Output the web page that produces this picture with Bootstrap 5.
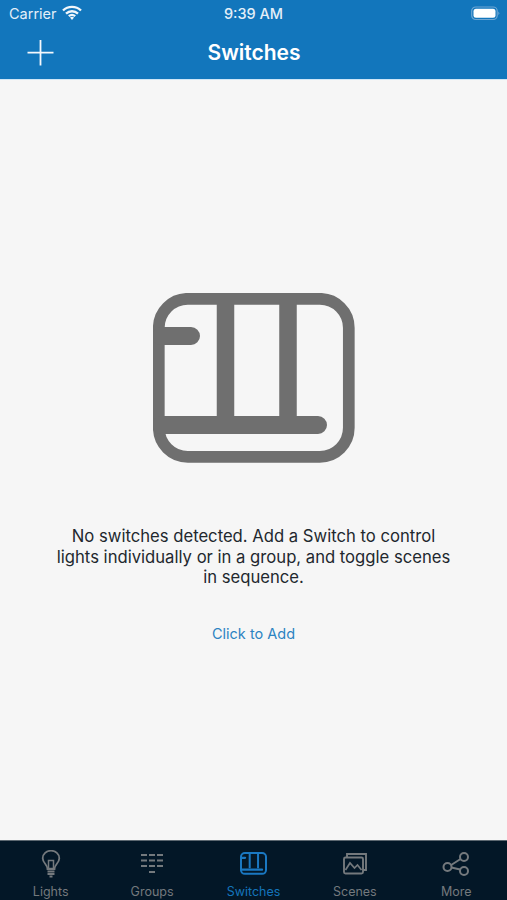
<!DOCTYPE html>
<html lang="en"><head><meta charset="utf-8"><title>Switches</title>
<link href="https://cdn.jsdelivr.net/npm/bootstrap@5.3.0/dist/css/bootstrap.min.css" rel="stylesheet">
<style>
html,body{height:900px;overflow:hidden}
body{font-family:Inter,"Liberation Sans",sans-serif;background:#f6f6f6;width:507px}
.shell{height:900px}
.topbar{background:#1276bc;color:#fff;height:80px;border-bottom:1px solid #cfe6f7}
.statusline{height:27px;font-size:14px;padding:0 7px 0 9px;position:relative;color:#e4eff8}
.statusline .clock{position:absolute;left:0;right:0;text-align:center;font-weight:500;font-size:14.5px;top:5px;line-height:17px}
.carrier{margin-top:5px;line-height:17px;font-size:14.5px}
.wifi{margin-top:4px;margin-left:1px}
.batt{margin-top:6px}
.navline{height:52px;position:relative}
.navtitle{font-size:21px;font-weight:600;line-height:26px;text-align:center;padding-top:13px;padding-left:1px}
.plus{position:absolute;left:27px;top:13px}
.stage{padding-top:213px}
.msg{font-size:16.65px;line-height:20.5px;color:#22282e;width:404px;margin:63px auto 0;text-align:center}
.addlink{font-size:14.5px;color:#2c83c2;text-decoration:none;margin-top:36px;line-height:20px;text-align:center;display:block}
.tabs{height:60px;background:#031727;border-top:1px solid #5d6871}
.tabitem{width:101.4px;font-size:12.5px;color:#74797d;line-height:15px;padding-top:9px;text-align:center}
.tabitem svg{display:block;margin:0 auto 6px;height:28px}
.tabitem.on{color:#1474bb}
</style></head><body>
<div class="shell d-flex flex-column">
<header class="topbar flex-shrink-0">
 <div class="statusline d-flex justify-content-between">
  <div class="d-flex align-items-start gap-1"><span class="carrier">Carrier</span>
   <svg class="wifi" width="20" height="16" viewBox="0 0 20 16"><path d="M1 6.500a13 13 0 0 1 18 0M4 9.600a9 9 0 0 1 12 0M6.800 12.200a5 5 0 0 1 6.400 0" fill="none" stroke="#f2f7fb" stroke-width="2.400"/><path d="M10 16l-2-2.400a3 3 0 0 1 4 0z" fill="#f2f7fb"/></svg></div>
  <span class="clock">9:39 AM</span>
  <svg class="batt" width="29" height="15" viewBox="0 0 29 15"><rect x=".7" y="1" width="25.500" height="12.500" rx="4" fill="none" stroke="#6ea6d3" stroke-width="1.200"/><rect x="2.500" y="2.800" width="22" height="9" rx="2.500" fill="#fff"/><path d="M27.300 5.500a2 2 0 0 1 0 3.500z" fill="#6ea6d3"/></svg>
 </div>
 <div class="navline">
  <svg class="plus" width="27" height="27" viewBox="0 0 27 27"><path d="M13.500 0v25.500M0.500 12.700h26" stroke="#f4f8fc" stroke-width="1.800" fill="none"/></svg>
  <div class="navtitle">Switches</div>
 </div>
</header>
<main class="stage flex-grow-1">
 <svg class="d-block mx-auto" width="202" height="170" viewBox="0 0 202 170"><g fill="none" stroke="#6f6f6f"><rect x="5.800" y="5.800" width="190" height="158" rx="29" stroke-width="11.700"/><path d="M72.500 6v121M135 6v121" stroke-width="17.500"/></g><g stroke="#6f6f6f" stroke-width="18" stroke-linecap="round"><path d="M8 43h30M8 132h157"/></g></svg>
 <p class="msg mb-0">No switches detected. Add a Switch to control lights individually or in a group, and toggle scenes in sequence.</p>
 <a class="addlink" href="#">Click to Add</a>
</main>
<nav class="tabs flex-shrink-0 d-flex">
 <div class="tabitem"><svg width="24" height="28" viewBox="0 0 24 28" fill="none" stroke="#74797d" stroke-width="1.800"><path d="M8.500 19c0-4.500-4.800-6-4.800-10.800a8.300 7.500 0 0 1 16.600 0c0 4.800-4.800 6.300-4.800 10.800z"/><path d="M8.500 21.500h7M8.500 24h7M10.500 26.500h3" stroke-width="1.900"/><path d="M9.500 10.500h5v8h-5z" stroke-width="1.500"/></svg>Lights</div>
 <div class="tabitem"><svg width="26" height="28" viewBox="0 0 26 28" fill="none" stroke="#74797d" stroke-width="1.900"><path d="M2 5h6M10 5h6M18 5h6M2 10.500h6M10 10.500h6M18 10.500h6M2 16h6M10 16h6M18 16h6M10 22h6"/></svg>Groups</div>
 <div class="tabitem on"><svg width="27" height="28" viewBox="0 0 202 209" fill="none" stroke="#1a78c2" stroke-width="15"><rect x="7.500" y="22" width="187" height="156" rx="29"/><path d="M72.500 16v120M135 16v120"/><path d="M8 58h30M8 147h157" stroke-width="17" stroke-linecap="round"/></svg>Switches</div>
 <div class="tabitem"><svg width="26" height="28" viewBox="0 0 26 28" fill="none" stroke="#74797d" stroke-width="1.900"><path d="M5 7V4h19v16h-3"/><rect x="2" y="7.500" width="19" height="16" rx="1.500"/><path d="M3.500 20l4.500-7 4.500 5 3-3 4 5" stroke-width="1.700"/></svg>Scenes</div>
 <div class="tabitem"><svg width="28" height="28" viewBox="0 0 28 28" fill="none" stroke="#74797d" stroke-width="2"><circle cx="5.500" cy="17" r="4"/><circle cx="22" cy="7" r="4"/><circle cx="22" cy="21" r="4"/><path d="M9.200 15l9.300-6M9.500 17.500l8.500 2"/></svg>More</div>
</nav>
</div>
</body></html>
